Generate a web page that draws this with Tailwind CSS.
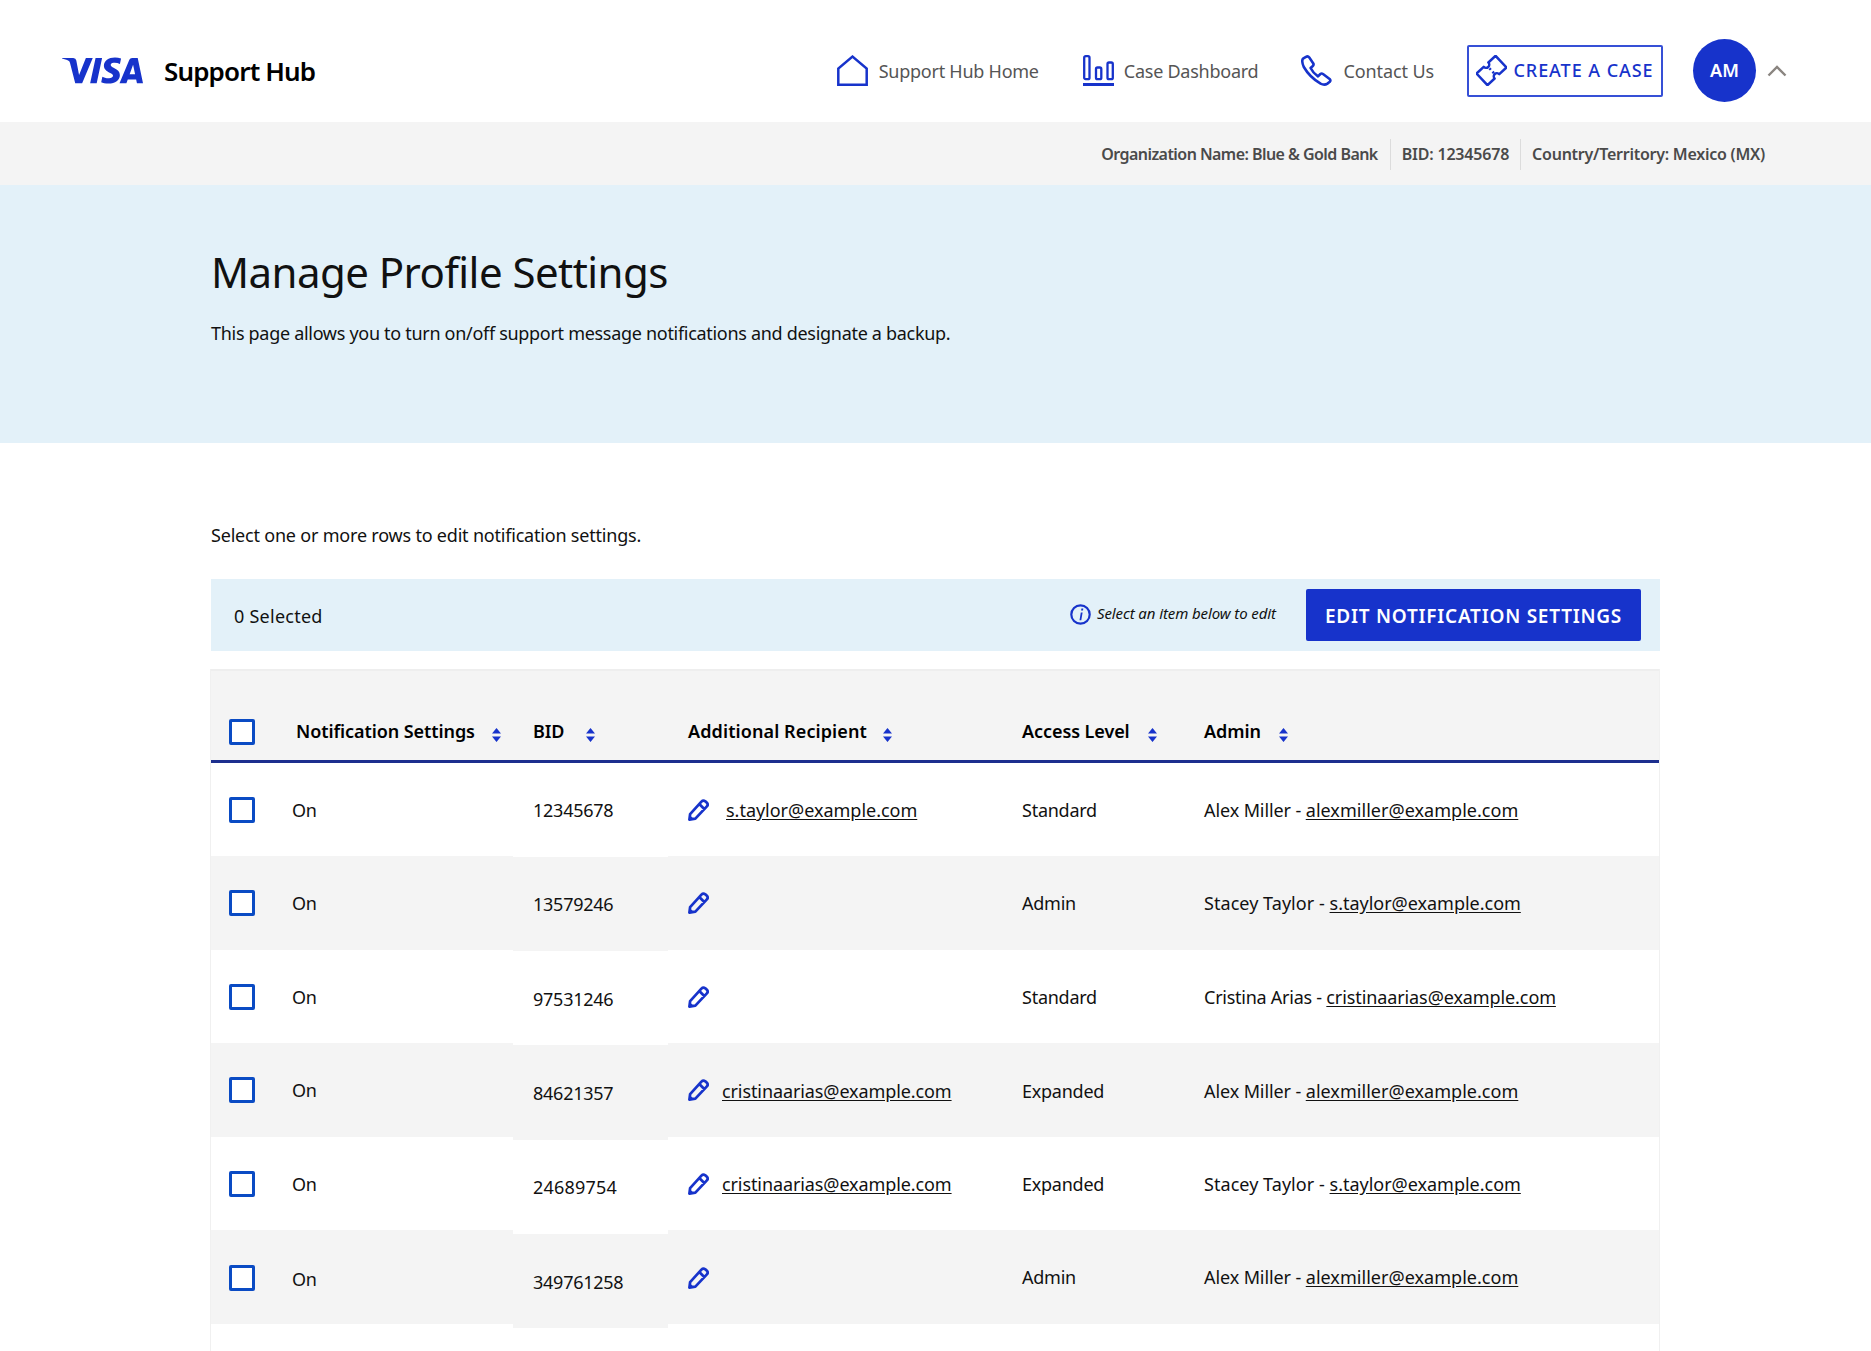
<!DOCTYPE html>
<html lang="en">
<head>
  <meta charset="UTF-8">
  <title>Manage Profile Settings</title>
  <script src="https://cdn.jsdelivr.net/npm/@tailwindcss/browser@4"></script>
</head>
<body class="h-[1351px] overflow-hidden bg-white font-['Noto_Sans','Liberation_Sans',sans-serif] text-[#111]">

  <svg class="hidden">
    <symbol id="sort" viewBox="0 0 9 14"><path d="M4.5 0 L9 5.5 H0 Z M0 8.5 H9 L4.5 14 Z" fill="#1733cb"/></symbol>
    <symbol id="pencil" viewBox="0 0 20 21"><path d="M1.3 19.7 L2 14.5 L12.8 2.5 Q14.5 .8 16.5 2.2 L18 3.6 Q19.6 5.4 18 7 L7 18.8 Z M11 5 L15.5 9.5" fill="none" stroke="#1733cb" stroke-width="2.6" stroke-linejoin="round"/><path d="M1 20 L1.7 15.4 L5.8 19.2 Z" fill="#1733cb"/></symbol>
  </svg>

  <header class="h-[122px] pt-[19px] flex items-center pl-[62px] pr-[84px]">
    <svg class="w-[81px] h-[27px]" viewBox="0 8 24 8" preserveAspectRatio="none"><path fill="#1733cb" d="M9.112 8.262L5.97 15.758H3.92L2.374 9.775c-.094-.368-.175-.503-.461-.658C1.447 8.864.677 8.627 0 8.479l.046-.217h3.3a.904.904 0 01.894.764l.817 4.338 2.018-5.102zm8.033 5.049c.008-1.979-2.736-2.088-2.717-2.972.006-.269.262-.555.822-.628a3.66 3.66 0 011.913.336l.34-1.59a5.207 5.207 0 00-1.814-.333c-1.917 0-3.266 1.02-3.278 2.479-.012 1.079.963 1.68 1.698 2.04.756.367 1.01.603 1.006.931-.005.504-.602.725-1.16.734-.975.015-1.54-.263-1.992-.473l-.351 1.642c.453.208 1.289.39 2.156.398 2.037 0 3.37-1.006 3.377-2.564m5.061 2.447H24l-1.565-7.496h-1.656a.883.883 0 00-.826.55l-2.909 6.946h2.036l.405-1.12h2.488zm-2.163-2.656l1.02-2.815.588 2.815zm-8.16-4.84l-1.603 7.496H8.34l1.605-7.496z"/></svg>
    <span class="ml-[21px] mt-[2px] text-[26px] font-semibold tracking-[-0.85px] text-black">Support Hub</span>

    <nav class="ml-auto flex items-center text-[18px] tracking-[-0.25px] text-[#555]">
      <a class="mt-[2px] flex items-center gap-[11px]" href="#">
        <svg class="w-[31px] h-[31px] -mt-[2px]" viewBox="0 0 31 31"><path d="M1.3 29.8 V13.5 L15.5 1.6 L29.7 13.5 V29.8 Z" fill="none" stroke="#1733cb" stroke-width="2.5"/></svg>
        Support Hub Home
      </a>
      <a class="ml-[44px] mt-[2px] flex items-center gap-[10px]" href="#">
        <svg class="w-[31px] h-[31px] -mt-[2px]" viewBox="0 0 31 31"><g fill="none" stroke="#1733cb" stroke-width="2.3"><rect x="1.2" y="1.2" width="5.3" height="23" rx="1.5"/><rect x="13" y="12.5" width="5.3" height="11.7" rx="1.5"/><rect x="24.5" y="7.5" width="5.3" height="16.7" rx="1.5"/></g><rect y="28" width="31" height="3" fill="#1733cb"/></svg>
        Case Dashboard
      </a>
      <a class="ml-[43px] mt-[2px] flex items-center gap-[11px] tracking-[-0.1px]" href="#">
        <svg class="w-[31px] h-[31px] -mt-[2px]" viewBox="0 0 31 31"><path d="M5 1.8 Q7 .8 8.3 2.6 L12.3 8.4 Q13 9.8 11.8 11 L9.6 13 Q12 18 17 21.4 L19.4 19 Q20.6 18 22 19 L28.6 24 Q30 25.4 28.8 26.8 L26.4 28.6 Q23.4 30.6 19.6 28.6 Q9 22.6 2.8 12 Q.2 6 2 3.6 Z" fill="none" stroke="#1733cb" stroke-width="2.6" stroke-linejoin="round"/></svg>
        Contact Us
      </a>
      <a class="ml-[33px] w-[196px] h-[52px] flex items-center justify-center gap-[6px] border-2 border-[#3650d6] rounded-[2px] text-[18px] font-medium tracking-[0.95px] text-[#1733cb]" href="#">
        <svg class="w-[31px] h-[31px]" viewBox="0 0 31 31"><g transform="rotate(-43 15.5 15.5)" fill="none" stroke="#1733cb" stroke-width="2.5" stroke-linejoin="round"><path d="M2.5 7.5 H12.3 A3.2 3.2 0 0 0 18.7 7.5 H28.5 V23.5 H18.7 A3.2 3.2 0 0 0 12.3 23.5 H2.5 Z"/><path d="M15.5 12.5 V19" stroke-dasharray="2 2.5"/></g></svg>
        CREATE A CASE
      </a>
      <div class="ml-[30px] w-[63px] h-[63px] rounded-full bg-[#1733cb] flex items-center justify-center text-white text-[18px] font-semibold tracking-normal">AM</div>
      <svg class="ml-[11px] w-[20px] h-[12px]" viewBox="0 0 20 12"><path d="M1.5 10.5 L10 2 L18.5 10.5" fill="none" stroke="#8a8580" stroke-width="2.4"/></svg>
    </nav>
  </header>

  <div class="h-[63px] pt-[1px] bg-[#f4f4f4] flex items-center justify-end pr-[106px] text-[16px] font-semibold tracking-[-0.25px] text-[#4a4a4a]">
    <span class="pr-[12px] leading-[31px] border-r border-[#dcdcdc] tracking-[-0.55px]">Organization Name: Blue &amp; Gold Bank</span>
    <span class="px-[11px] leading-[31px] border-r border-[#dcdcdc] tracking-[-0.2px]">BID: 12345678</span>
    <span class="pl-[11px] leading-[31px]">Country/Territory: Mexico (MX)</span>
  </div>

  <section class="h-[258px] bg-[#e3f1f9] pl-[211px] pt-[62px]">
    <h1 class="text-[42px] leading-[50px] tracking-[-0.55px] text-[#111]">Manage Profile Settings</h1>
    <p class="mt-[23px] text-[18px] leading-[26px] tracking-[-0.3px]">This page allows you to turn on/off support message notifications and designate a backup.</p>
  </section>

  <main class="px-[211px]">
    <p class="pt-[79px] text-[18px] leading-[26px] tracking-[-0.2px]">Select one or more rows to edit notification settings.</p>

    <div class="mt-[31px] h-[72px] bg-[#e3f1f9] flex items-center pl-[23px] pr-[19px]">
      <span class="mt-[2px] text-[18px] tracking-[0.25px]">0 Selected</span>
      <svg class="ml-auto w-[21px] h-[21px] -mt-[2px]" viewBox="0 0 21 21"><circle cx="10.5" cy="10.5" r="9.2" fill="none" stroke="#1733cb" stroke-width="2.2"/><path d="M11.4 4.6 h1.9 l-.3 2 h-1.9 z M10.8 8.4 h1.8 L11.3 16.2 H9.5 z" fill="#1733cb"/></svg>
      <span class="ml-[6px] -mt-[3px] text-[15px] italic tracking-[-0.1px]">Select an item below to edit</span>
      <button class="ml-[30px] w-[335px] h-[52px] pt-[2px] bg-[#1733cb] rounded-[2px] text-white text-[19px] font-semibold tracking-[0.75px]">EDIT NOTIFICATION SETTINGS</button>
    </div>

    <div class="mt-[18px] -ml-px w-[1450px] border-x-[3px] border-[#f0f0f0]">
      <div class="h-[94px] bg-[#f4f4f4] border-t-[2px] border-[#eeeeee] border-b-[3px] border-b-[#1c2f8e] grid grid-cols-[81px_221px_155px_354px_182px_1fr] items-end pb-[15px] text-[18px] font-semibold tracking-[-0.08px] text-black -mx-[2px]">
        <div class="pl-[18px]"><span class="block w-[26px] h-[26px] border-[3px] border-[#0a4bc4] rounded-[2px] bg-white"></span></div>
        <div class="pl-[4px] flex items-center gap-[17px]">Notification Settings <svg class="w-[9px] h-[14px] mt-[6px]"><use href="#sort"/></svg></div>
        <div class="pl-[20px] flex items-center gap-[22px]">BID <svg class="w-[9px] h-[14px] mt-[6px]"><use href="#sort"/></svg></div>
        <div class="pl-[20px] flex items-center gap-[16px] tracking-[0.1px]">Additional Recipient <svg class="w-[9px] h-[14px] mt-[6px]"><use href="#sort"/></svg></div>
        <div class="flex items-center gap-[18px]">Access Level <svg class="w-[9px] h-[14px] mt-[6px]"><use href="#sort"/></svg></div>
        <div class="flex items-center gap-[18px]">Admin <svg class="w-[9px] h-[14px] mt-[6px]"><use href="#sort"/></svg></div>
      </div>

      <div class="h-[93px] bg-white grid grid-cols-[81px_221px_155px_354px_182px_1fr] items-center text-[18px] tracking-[-0.25px] -mx-[2px]">
        <div class="pl-[18px]"><span class="block w-[26px] h-[26px] border-[3px] border-[#0a4bc4] rounded-[2px] bg-white"></span></div>
        <div>On</div>
        <div class="self-start h-[94px] pl-[20px] pt-[1px] flex items-center bg-white">12345678</div>
        <div class="pl-[20px] flex items-center"><svg class="w-[21px] h-[22px]"><use href="#pencil"/></svg><a class="ml-[17px] tracking-[-0.02px] underline underline-offset-2" href="#">s.taylor@example.com</a></div>
        <div>Standard</div>
        <div class="tracking-[-0.1px]">Alex Miller - <a class="tracking-[0.03px] underline underline-offset-2" href="#">alexmiller@example.com</a></div>
      </div>
      <div class="h-[94px] bg-[#f4f4f4] grid grid-cols-[81px_221px_155px_354px_182px_1fr] items-center text-[18px] tracking-[-0.25px] -mx-[2px]">
        <div class="pl-[18px] -mt-[2px]"><span class="block w-[26px] h-[26px] border-[3px] border-[#0a4bc4] rounded-[2px] bg-white"></span></div>
        <div>On</div>
        <div class="self-start mt-[1px] h-[94px] pl-[20px] pt-[1px] flex items-center bg-[#f4f4f4]">13579246</div>
        <div class="pl-[20px] -mt-[2px] flex items-center"><svg class="w-[21px] h-[22px]"><use href="#pencil"/></svg></div>
        <div>Admin</div>
        <div class="tracking-[0.05px]">Stacey Taylor - <a class="tracking-[-0.02px] underline underline-offset-2" href="#">s.taylor@example.com</a></div>
      </div>
      <div class="h-[93px] bg-white grid grid-cols-[81px_221px_155px_354px_182px_1fr] items-center text-[18px] tracking-[-0.25px] -mx-[2px]">
        <div class="pl-[18px] -mt-[2px]"><span class="block w-[26px] h-[26px] border-[3px] border-[#0a4bc4] rounded-[2px] bg-white"></span></div>
        <div>On</div>
        <div class="self-start mt-[1px] h-[94px] pl-[20px] pt-[2px] flex items-center bg-white">97531246</div>
        <div class="pl-[20px] -mt-[2px] flex items-center"><svg class="w-[21px] h-[22px]"><use href="#pencil"/></svg></div>
        <div>Standard</div>
        <div>Cristina Arias - <a class="tracking-[-0.1px] underline underline-offset-2" href="#">cristinaarias@example.com</a></div>
      </div>
      <div class="h-[94px] bg-[#f4f4f4] grid grid-cols-[81px_221px_155px_354px_182px_1fr] items-center text-[18px] tracking-[-0.25px] -mx-[2px]">
        <div class="pl-[18px] -mt-[4px]"><span class="block w-[26px] h-[26px] border-[3px] border-[#0a4bc4] rounded-[2px] bg-white"></span></div>
        <div class="-mt-[2px]">On</div>
        <div class="self-start mt-[2px] h-[95px] pl-[20px] pt-[1px] flex items-center bg-[#f4f4f4]">84621357</div>
        <div class="pl-[20px] flex items-center"><svg class="w-[21px] h-[22px] -mt-[3px]"><use href="#pencil"/></svg><a class="ml-[13px] tracking-[-0.1px] underline underline-offset-2" href="#">cristinaarias@example.com</a></div>
        <div>Expanded</div>
        <div class="tracking-[-0.1px]">Alex Miller - <a class="tracking-[0.03px] underline underline-offset-2" href="#">alexmiller@example.com</a></div>
      </div>
      <div class="h-[93px] bg-white grid grid-cols-[81px_221px_155px_354px_182px_1fr] items-center text-[18px] tracking-[-0.25px] -mx-[2px]">
        <div class="pl-[18px] -mt-[4px]"><span class="block w-[26px] h-[26px] border-[3px] border-[#0a4bc4] rounded-[2px] bg-white"></span></div>
        <div class="-mt-[2px]">On</div>
        <div class="self-start mt-[3px] h-[94px] pl-[20px] pt-[1px] tracking-[0.2px] flex items-center bg-white">24689754</div>
        <div class="pl-[20px] -mt-[2px] flex items-center"><svg class="w-[21px] h-[22px] -mt-[2px]"><use href="#pencil"/></svg><a class="ml-[13px] tracking-[-0.1px] underline underline-offset-2" href="#">cristinaarias@example.com</a></div>
        <div class="-mt-[2px]">Expanded</div>
        <div class="-mt-[2px] tracking-[0.05px]">Stacey Taylor - <a class="tracking-[-0.02px] underline underline-offset-2" href="#">s.taylor@example.com</a></div>
      </div>
      <div class="h-[94px] bg-[#f4f4f4] grid grid-cols-[81px_221px_155px_354px_182px_1fr] items-center text-[18px] tracking-[-0.25px] -mx-[2px]">
        <div class="pl-[18px] -mt-[2px]"><span class="block w-[26px] h-[26px] border-[3px] border-[#0a4bc4] rounded-[2px] bg-white"></span></div>
        <div class="pt-[1px]">On</div>
        <div class="self-start mt-[4px] h-[94px] pl-[20px] pt-[2px] flex items-center bg-[#f4f4f4]">349761258</div>
        <div class="pl-[20px] -mt-[2px] flex items-center"><svg class="w-[21px] h-[22px]"><use href="#pencil"/></svg></div>
        <div class="-mt-[4px]">Admin</div>
        <div class="-mt-[4px] tracking-[-0.1px]">Alex Miller - <a class="tracking-[0.03px] underline underline-offset-2" href="#">alexmiller@example.com</a></div>
      </div>
      <div class="h-[60px] bg-white -mx-[2px]"></div>
    </div>
  </main>
</body>
</html>
